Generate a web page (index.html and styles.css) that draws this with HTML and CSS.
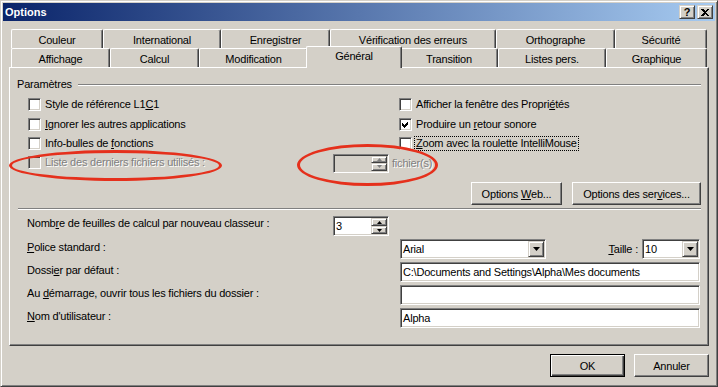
FILE: index.html
```html
<!DOCTYPE html>
<html lang="fr">
<head>
    <meta charset="UTF-8">
    <title>Options</title>
    <link rel="stylesheet" href="styles.css">
</head>
<body>
    <div class="window">
        <div class="titlebar">
            <span class="title">Options</span>
            <div class="caption-btns">
                <span class="cap-btn help">?</span>
                <span class="cap-btn">
                    <svg width="8" height="7" viewBox="0 0 8 7" shape-rendering="crispEdges"><path d="M0 0h2l2 2 2-2h2L5 3.5 8 7H6L4 5 2 7H0l3-3.5z" fill="#000"/></svg>
                </span>
            </div>
        </div>

        <div class="client">
            <div class="tab-row">
                <div class="tab t-couleur">Couleur</div>
                <div class="tab t-inter">International</div>
                <div class="tab t-enreg">Enregistrer</div>
                <div class="tab t-verif">Vérification des erreurs</div>
                <div class="tab t-ortho">Orthographe</div>
                <div class="tab t-secu">Sécurité</div>
            </div>
            <div class="tab-row">
                <div class="tab t-affich">Affichage</div>
                <div class="tab t-calcul">Calcul</div>
                <div class="tab t-modif">Modification</div>
                <div class="tab t-general active">Général</div>
                <div class="tab t-trans">Transition</div>
                <div class="tab t-listes">Listes pers.</div>
                <div class="tab t-graph">Graphique</div>
            </div>

            <div class="panel">
                <div class="group-head">
                    <span>Paramètres</span>
                    <span class="etched"></span>
                </div>

                <div class="checks">
                    <div class="check col-left"><span class="box"></span><span class="lbl">Style de référence L1<u>C</u>1</span></div>
                    <div class="check col-right"><span class="box"></span><span class="lbl">Afficher la fenêtre des Propri<u>é</u>tés</span></div>
                    <div class="check col-left"><span class="box"></span><span class="lbl"><u>I</u>gnorer les autres applications</span></div>
                    <div class="check col-right"><span class="box"><svg width="11" height="11" viewBox="0 0 11 11" shape-rendering="crispEdges"><path d="M2 4l2 2 4-4v3l-4 4-2-2z" fill="#000"/></svg></span><span class="lbl">Produire un <u>r</u>etour sonore</span></div>
                    <div class="check col-left"><span class="box"></span><span class="lbl">Info-bulles de <u>f</u>onctions</span></div>
                    <div class="check col-right"><span class="box"></span><span class="lbl focus"><u>Z</u>oom avec la roulette IntelliMouse</span></div>
                    <div class="check col-left disabled"><span class="box"></span><span class="lbl">Liste des derniers fichiers utilisés :</span></div>
                    <div class="spin-cell">
                        <div class="sunken spin off">
                            <span class="val"></span>
                            <span class="spin-btns">
                                <span class="raised"><svg width="5" height="3" viewBox="0 0 5 3"><path d="M2.5 0L5 3H0z" fill="#808080"/></svg></span>
                                <span class="raised"><svg width="5" height="3" viewBox="0 0 5 3"><path d="M0 0h5L2.5 3z" fill="#808080"/></svg></span>
                            </span>
                        </div>
                        <span class="gray-text">fichier(s)</span>
                    </div>
                </div>

                <div class="btn-row">
                    <span class="btn w-web"><span>Options <u>W</u>eb...</span></span>
                    <span class="btn w-serv"><span>Options des ser<u>v</u>ices...</span></span>
                </div>

                <div class="separator"></div>

                <div class="form">
                    <span class="flabel">Nomb<u>r</u>e de feuilles de calcul par nouveau classeur :</span>
                    <div class="sunken spin">
                        <span class="val">3</span>
                        <span class="spin-btns">
                            <span class="raised"><svg width="5" height="3" viewBox="0 0 5 3"><path d="M2.5 0L5 3H0z" fill="#000"/></svg></span>
                            <span class="raised"><svg width="5" height="3" viewBox="0 0 5 3"><path d="M0 0h5L2.5 3z" fill="#000"/></svg></span>
                        </span>
                    </div>
                    <span class="empty"></span>

                    <span class="flabel wide"><u>P</u>olice standard :</span>
                    <div class="font-row">
                        <div class="sunken combo w-font">
                            <span class="val">Arial</span>
                            <span class="raised drop"><svg width="7" height="4" viewBox="0 0 7 4"><path d="M0 0h7L3.5 4z" fill="#000"/></svg></span>
                        </div>
                        <span class="size-label"><u>T</u>aille :</span>
                        <div class="sunken combo w-size">
                            <span class="val">10</span>
                            <span class="raised drop"><svg width="7" height="4" viewBox="0 0 7 4"><path d="M0 0h7L3.5 4z" fill="#000"/></svg></span>
                        </div>
                    </div>

                    <span class="flabel wide">Dossi<u>e</u>r par défaut :</span>
                    <div class="sunken field"><span class="val">C:\Documents and Settings\Alpha\Mes documents</span></div>

                    <span class="flabel wide">Au <u>d</u>émarrage, ouvrir tous les fichiers du dossier :</span>
                    <div class="sunken field"><span class="val"></span></div>

                    <span class="flabel wide"><u>N</u>om d'utilisateur :</span>
                    <div class="sunken field"><span class="val">Alpha</span></div>
                </div>
            </div>

            <div class="dialog-btns">
                <span class="btn default"><span>OK</span></span>
                <span class="btn"><span>Annuler</span></span>
            </div>
        </div>

        <!-- red marks drawn over the screenshot -->
        <span class="mark mark-list"></span>
        <span class="mark mark-spin"></span>
    </div>
</body>
</html>
```

FILE: styles.css
```css
* {
    box-sizing: border-box;
}
body {
    margin: 0;
    background-color: #D4D0C8;
    font-family: "Liberation Sans", Arial, sans-serif;
    font-size: 11px;
    letter-spacing: -0.2px;
    color: #000;
}
u {
    text-decoration: underline;
    text-underline-offset: 1px;
}

/* window frame */
.window {
    position: relative;
    width: 718px;
    height: 387px;
    background-color: #D4D0C8;
    border: 1px solid;
    border-color: #D4D0C8 #404040 #404040 #D4D0C8;
    box-shadow: inset 1px 1px #fff, inset -1px -1px #808080;
    padding: 2px;
}
.titlebar {
    height: 18px;
    display: flex;
    align-items: center;
    justify-content: space-between;
    padding: 0 2px;
    background: linear-gradient(to right, #0A246A, #A6CAF0);
}
.title {
    color: #fff;
    font-weight: bold;
    letter-spacing: 0;
}
.caption-btns {
    display: flex;
    gap: 2px;
}
.cap-btn, .raised {
    display: flex;
    align-items: center;
    justify-content: center;
    background-color: #D4D0C8;
    border: 1px solid;
    border-color: #D4D0C8 #404040 #404040 #D4D0C8;
    box-shadow: inset 1px 1px #fff, inset -1px -1px #808080;
}
.cap-btn {
    width: 16px;
    height: 14px;
}
.cap-btn.help {
    font-weight: bold;
    font-size: 11px;
    letter-spacing: 0;
    line-height: 10px;
}

/* client area */
.client {
    padding: 8px 6px 0 6px;
}
.tab-row {
    display: flex;
    align-items: flex-start;
    height: 19px;
    margin-left: 2px;
}
.tab {
    height: 19px;
    display: flex;
    align-items: center;
    justify-content: center;
    padding-top: 2px;
    border-top: 1px solid #fff;
    border-left: 1px solid #fff;
    border-right: 1px solid #404040;
    border-radius: 2px 2px 0 0;
    box-shadow: inset -1px 0 #808080;
    background-color: #D4D0C8;
    white-space: nowrap;
}
.tab.active {
    position: relative;
    z-index: 1;
    height: 22px;
    margin: -2px -2px -1px -2px;
    padding: 0 0 3px 0;
}
.t-couleur { width: 92px; }
.t-inter { width: 118px; }
.t-enreg { width: 109px; }
.t-verif { width: 166px; }
.t-ortho { width: 119px; }
.t-secu { width: 92px; }
.t-affich { width: 99px; }
.t-calcul { width: 89px; }
.t-modif { width: 109px; }
.t-general { width: 96px; }
.t-trans { width: 98px; }
.t-listes { width: 108px; }
.t-graph { width: 101px; }

.panel {
    width: 700px;
    height: 279px;
    border: 1px solid;
    border-color: #fff #404040 #404040 #fff;
    box-shadow: inset -1px -1px #808080;
    padding: 10px 7px 0 7px;
}
.group-head {
    display: flex;
    align-items: flex-start;
    height: 13px;
    line-height: 13px;
}
.etched {
    flex: 1;
    margin: 6px 0 0 6px;
    border-top: 1px solid #808080;
    border-bottom: 1px solid #fff;
}

/* check boxes */
.checks {
    display: grid;
    grid-template-columns: 305px 66px 1fr;
    grid-template-rows: 20px 19px 19px 19px;
    margin: 4px 0 0 11px;
}
.col-left { grid-column: 1; }
.col-right { grid-column: 3; }
.check {
    height: 19px;
    display: flex;
    align-items: center;
}
.box {
    width: 13px;
    height: 13px;
    flex: none;
    border: 1px solid;
    border-color: #808080 #fff #fff #808080;
    box-shadow: inset 1px 1px #404040, inset -1px -1px #D4D0C8;
    background-color: #fff;
}
.box svg {
    display: block;
}
.lbl {
    margin-left: 2px;
    padding: 0 1px;
    line-height: 13px;
    border: 1px solid transparent;
    white-space: nowrap;
}
.lbl.focus {
    border: 1px dotted #000;
}
.disabled .box {
    background-color: #D4D0C8;
}
.disabled .lbl, .gray-text {
    color: #808080;
    text-shadow: 1px 1px #fff;
}
.spin-cell {
    grid-column: 2 / 4;
    display: flex;
    align-items: center;
    gap: 3px;
    padding-top: 1px;
}

/* sunken fields */
.sunken {
    display: flex;
    height: 20px;
    padding: 1px;
    border: 1px solid;
    border-color: #808080 #fff #fff #808080;
    box-shadow: inset 1px 1px #404040, inset -1px -1px #D4D0C8;
    background-color: #fff;
}
.val {
    flex: 1;
    padding-left: 1px;
    line-height: 16px;
    white-space: nowrap;
    overflow: hidden;
}
.spin {
    width: 56px;
}
.spin-cell .spin {
    height: 19px;
}
.spin.off {
    background-color: #D4D0C8;
}
.spin-btns {
    width: 16px;
    display: flex;
    flex-direction: column;
}
.spin-btns .raised {
    flex: 1;
}
.spin-btns svg, .drop svg {
    display: block;
}

/* push buttons */
.btn-row {
    display: flex;
    justify-content: flex-end;
    gap: 10px;
    margin-top: 10px;
}
.btn {
    height: 23px;
    display: flex;
    align-items: center;
    justify-content: center;
    background-color: #D4D0C8;
    border: 1px solid;
    border-color: #fff #404040 #404040 #fff;
    box-shadow: inset -1px -1px #808080;
    white-space: nowrap;
}
.btn.default {
    border-color: #000;
    box-shadow: inset 1px 1px #fff, inset -1px -1px #404040, inset -2px -2px #808080;
}
.w-web { width: 91px; }
.w-serv { width: 129px; }
.separator {
    margin: 3px 0 0 1px;
    border-top: 1px solid #808080;
    border-bottom: 1px solid #fff;
}

/* lower form */
.form {
    display: grid;
    grid-template-columns: 306px 67px 300px;
    grid-auto-rows: 20px;
    row-gap: 3px;
    margin: 6px 0 0 10px;
}
.flabel {
    line-height: 13px;
    padding-top: 1px;
    white-space: nowrap;
}
.flabel.wide {
    grid-column: 1 / 3;
    padding-top: 2px;
}
.font-row {
    display: flex;
    align-items: center;
}
.combo {
    height: 20px;
}
.w-font { width: 146px; }
.w-size { width: 58px; }
.size-label {
    margin-left: auto;
    margin-right: 4px;
}
.drop {
    width: 16px;
    height: 16px;
}
.field {
    width: 300px;
}

.dialog-btns {
    display: flex;
    justify-content: flex-end;
    gap: 9px;
    margin-top: 8px;
}
.dialog-btns .btn {
    width: 75px;
}

/* red ellipses */
.mark {
    position: absolute;
    border: 3px solid #E5301C;
    border-radius: 50%;
}
.mark-list {
    left: 8px;
    top: 149px;
    width: 213px;
    height: 31px;
}
.mark-spin {
    left: 296px;
    top: 143px;
    width: 141px;
    height: 42px;
}
```
